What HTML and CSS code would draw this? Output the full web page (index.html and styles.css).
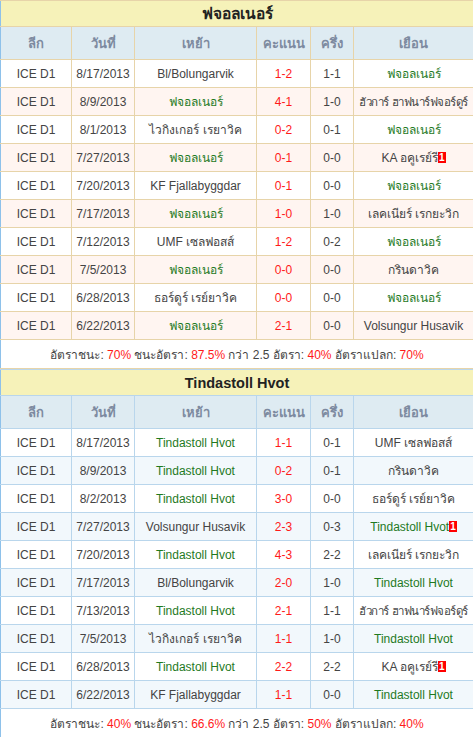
FILE: index.html
```html
<!DOCTYPE html>
<html>
<head>
<meta charset="utf-8">
<link rel="stylesheet" href="styles.css">
</head>
<body>
<table class="tbl t1">
  <colgroup><col class="c1"><col class="c2"><col class="c3"><col class="c4"><col class="c5"><col class="c6"></colgroup>
  <tr class="title"><td colspan="6">ฟจอลเนอร์</td></tr>
  <tr class="head"><td>ลีก</td><td>วันที่</td><td>เหย้า</td><td>คะแนน</td><td>ครึ่ง</td><td>เยือน</td></tr>
  <tr><td>ICE D1</td><td>8/17/2013</td><td>Bl/Bolungarvik</td><td class="sc">1-2</td><td>1-1</td><td class="hi">ฟจอลเนอร์</td></tr>
  <tr class="alt"><td>ICE D1</td><td>8/9/2013</td><td class="hi">ฟจอลเนอร์</td><td class="sc">4-1</td><td>1-0</td><td class="tight">ฮัวการ์ ฮาฟนาร์ฟจอร์ดูร์</td></tr>
  <tr><td>ICE D1</td><td>8/1/2013</td><td>ไวกิงเกอร์ เรยาวิค</td><td class="sc">0-2</td><td>0-1</td><td class="hi">ฟจอลเนอร์</td></tr>
  <tr class="alt"><td>ICE D1</td><td>7/27/2013</td><td class="hi">ฟจอลเนอร์</td><td class="sc">0-1</td><td>0-0</td><td>KA อคูเรย์รี<span class="badge">1</span></td></tr>
  <tr><td>ICE D1</td><td>7/20/2013</td><td>KF Fjallabyggdar</td><td class="sc">0-1</td><td>0-0</td><td class="hi">ฟจอลเนอร์</td></tr>
  <tr class="alt"><td>ICE D1</td><td>7/17/2013</td><td class="hi">ฟจอลเนอร์</td><td class="sc">1-0</td><td>1-0</td><td>เลคเนียร์ เรกยะวิก</td></tr>
  <tr><td>ICE D1</td><td>7/12/2013</td><td>UMF เซลฟอสส์</td><td class="sc">1-2</td><td>0-2</td><td class="hi">ฟจอลเนอร์</td></tr>
  <tr class="alt"><td>ICE D1</td><td>7/5/2013</td><td class="hi">ฟจอลเนอร์</td><td class="sc">0-0</td><td>0-0</td><td>กรินดาวิค</td></tr>
  <tr><td>ICE D1</td><td>6/28/2013</td><td>ธอร์ดูร์ เรย์ยาวิค</td><td class="sc">0-0</td><td>0-0</td><td class="hi">ฟจอลเนอร์</td></tr>
  <tr class="alt"><td>ICE D1</td><td>6/22/2013</td><td class="hi">ฟจอลเนอร์</td><td class="sc">2-1</td><td>0-0</td><td>Volsungur Husavik</td></tr>
  <tr class="sum"><td colspan="6">อัตราชนะ: <span class="r">70%</span> ชนะอัตรา: <span class="r">87.5%</span> กว่า 2.5 อัตรา: <span class="r">40%</span> อัตราแปลก: <span class="r">70%</span></td></tr>
</table>
<table class="tbl t2">
  <colgroup><col class="c1"><col class="c2"><col class="c3"><col class="c4"><col class="c5"><col class="c6"></colgroup>
  <tr class="title"><td colspan="6">Tindastoll Hvot</td></tr>
  <tr class="head"><td>ลีก</td><td>วันที่</td><td>เหย้า</td><td>คะแนน</td><td>ครึ่ง</td><td>เยือน</td></tr>
  <tr><td>ICE D1</td><td>8/17/2013</td><td class="hi">Tindastoll Hvot</td><td class="sc">1-1</td><td>0-1</td><td>UMF เซลฟอสส์</td></tr>
  <tr class="alt"><td>ICE D1</td><td>8/9/2013</td><td class="hi">Tindastoll Hvot</td><td class="sc">0-2</td><td>0-1</td><td>กรินดาวิค</td></tr>
  <tr><td>ICE D1</td><td>8/2/2013</td><td class="hi">Tindastoll Hvot</td><td class="sc">3-0</td><td>0-0</td><td>ธอร์ดูร์ เรย์ยาวิค</td></tr>
  <tr class="alt"><td>ICE D1</td><td>7/27/2013</td><td>Volsungur Husavik</td><td class="sc">2-3</td><td>0-3</td><td class="hi">Tindastoll Hvot<span class="badge">1</span></td></tr>
  <tr><td>ICE D1</td><td>7/20/2013</td><td class="hi">Tindastoll Hvot</td><td class="sc">4-3</td><td>2-2</td><td>เลคเนียร์ เรกยะวิก</td></tr>
  <tr class="alt"><td>ICE D1</td><td>7/17/2013</td><td>Bl/Bolungarvik</td><td class="sc">2-0</td><td>1-0</td><td class="hi">Tindastoll Hvot</td></tr>
  <tr><td>ICE D1</td><td>7/13/2013</td><td class="hi">Tindastoll Hvot</td><td class="sc">2-1</td><td>1-1</td><td class="tight">ฮัวการ์ ฮาฟนาร์ฟจอร์ดูร์</td></tr>
  <tr class="alt"><td>ICE D1</td><td>7/5/2013</td><td>ไวกิงเกอร์ เรยาวิค</td><td class="sc">1-1</td><td>1-0</td><td class="hi">Tindastoll Hvot</td></tr>
  <tr><td>ICE D1</td><td>6/28/2013</td><td class="hi">Tindastoll Hvot</td><td class="sc">2-2</td><td>2-2</td><td>KA อคูเรย์รี<span class="badge">1</span></td></tr>
  <tr class="alt"><td>ICE D1</td><td>6/22/2013</td><td>KF Fjallabyggdar</td><td class="sc">1-1</td><td>0-0</td><td class="hi">Tindastoll Hvot</td></tr>
  <tr class="sum"><td colspan="6">อัตราชนะ: <span class="r">40%</span> ชนะอัตรา: <span class="r">66.6%</span> กว่า 2.5 อัตรา: <span class="r">50%</span> อัตราแปลก: <span class="r">40%</span></td></tr>
</table>
</body>
</html>
```
FILE: styles.css
```css
html, body {
  margin: 0;
  padding: 0;
  background: #ffffff;
}
body {
  font-family: "Liberation Sans", Arial, "Noto Sans", sans-serif;
  font-size: 12px;
  color: #444;
  width: 473px;
}
.tbl {
  width: 473px;
  border-collapse: collapse;
  table-layout: fixed;
  border: 1px solid #8ec1ea;
}
.c1 { width: 71px; }
.c2 { width: 63px; }
.c3 { width: 122px; }
.c4 { width: 54px; }
.c5 { width: 43px; }
.c6 { width: 120px; }
.tbl td {
  text-align: center;
  padding: 0;
  height: 27px;
  white-space: nowrap;
  overflow: hidden;
}
.t1 td { border: 1px solid #e7d4a9; }
.t2 td { border: 1px solid #b9d6ec; }
.tbl .title td {
  background: #f6f2b9;
  font-size: 14.5px;
  font-weight: bold;
  color: #222;
  height: 25px;
  border-left: 1px solid #8ec1ea;
  border-right: 1px solid #8ec1ea;
}
.t1 .title td { font-size: 15.5px; }
.tbl .head td {
  background: #deebf2;
  color: #7d8aa0;
  font-weight: bold;
  font-size: 13px;
  height: 32px;
}
.t1 .alt td { background: #fff5f1; }
.t2 .alt td { background: #f2f8fc; }
.tbl .sum td {
  background: #fff;
  color: #444;
  font-size: 12px;
  height: 28px;
  border-left: 1px solid #8ec1ea;
  border-right: 1px solid #8ec1ea;
}
.tbl td:first-child { border-left-color: #8ec1ea; }
.tbl td:last-child { border-right-color: #8ec1ea; }
.tbl td.tight { letter-spacing: -0.5px; font-size: 11.5px; }
.sc { color: #ff1a1a; }
.r { color: #ff1a1a; }
.hi { color: #1f7a1f; }
.badge {
  display: inline-block;
  background: #ff0000;
  color: #fff;
  font-weight: bold;
  font-size: 10px;
  line-height: 11px;
  padding: 0 1px;
  vertical-align: 1px;
}
```
